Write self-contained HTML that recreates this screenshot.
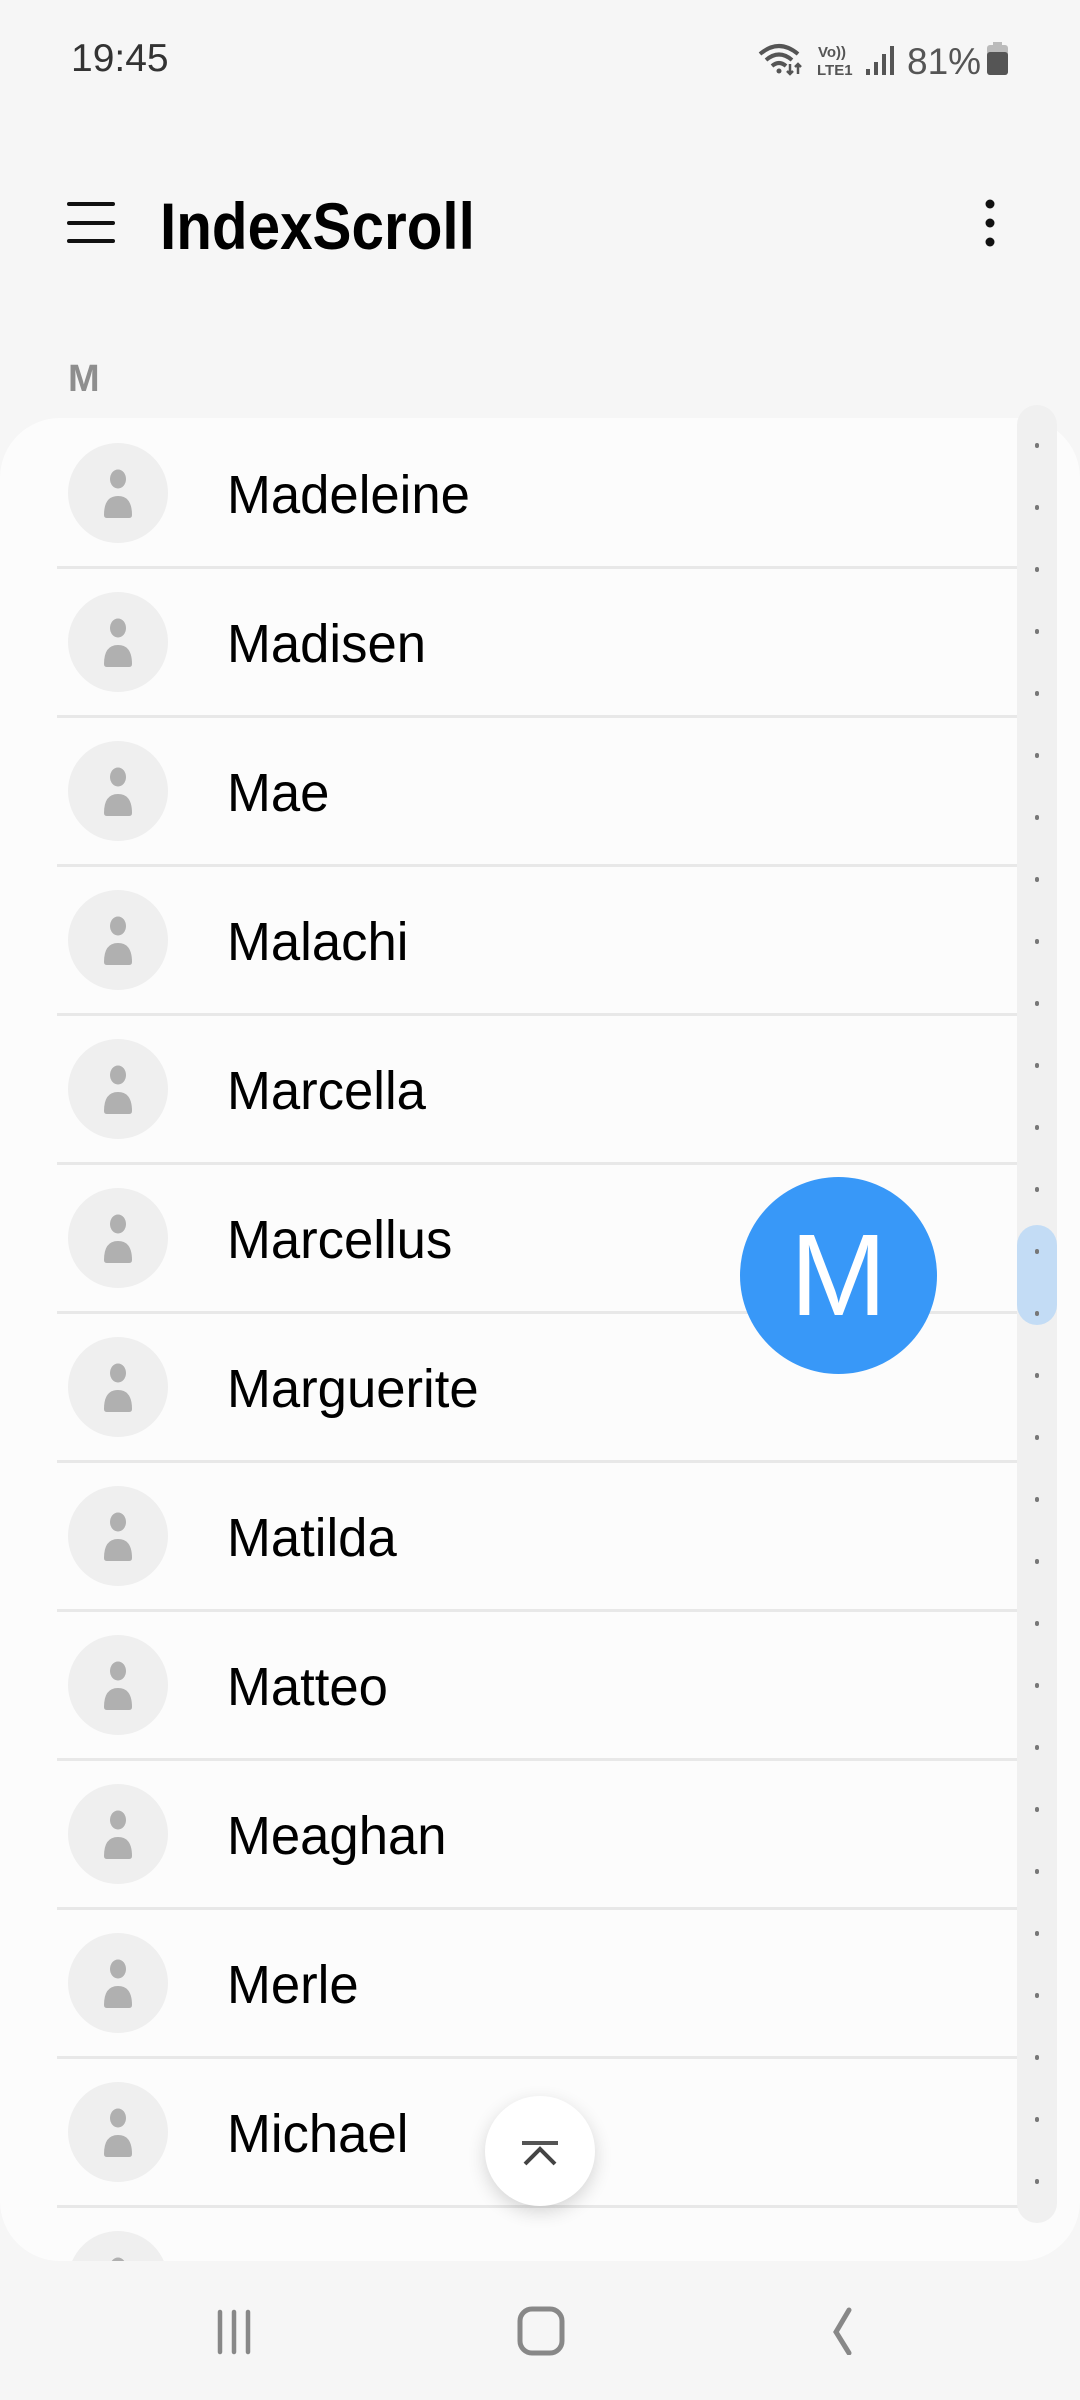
<!DOCTYPE html>
<html><head><meta charset="utf-8"><style>
*{margin:0;padding:0;box-sizing:border-box}
body{width:1080px;height:2400px;background:#f6f6f6;position:relative;overflow:hidden;font-family:"Liberation Sans",sans-serif}
.abs{position:absolute}
.row{position:absolute;left:0;width:1019px;height:149px}
.av{position:absolute;left:68px;top:25px;width:100px;height:100px;border-radius:50%;background:#efefef}
.nm{position:absolute;left:227px;top:3px;line-height:149px;font-size:54px;color:#000;transform:scaleX(0.975);transform-origin:left}
.sep{position:absolute;left:57px;right:0;bottom:-2px;height:3px;background:#e8e8e8}
.dot{position:absolute;left:1035px;width:4px;height:5px;border-radius:2px;background:#777}
</style></head><body>
<div class="abs" style="left:71px;top:37px;font-size:39px;color:#333">19:45</div>
<svg class="abs" style="left:755px;top:40px" width="260" height="40" viewBox="0 0 260 40">
<path d="M5 14 Q24 -2 43 14" stroke="#555" stroke-width="4" fill="none"/>
<path d="M11 20 Q24 9 37 20" stroke="#555" stroke-width="4" fill="none"/>
<path d="M17 26 Q24 20 31 26" stroke="#555" stroke-width="4" fill="none"/>
<circle cx="24" cy="31" r="2.5" fill="#555"/>
<path d="M35 24v10M32 31l3 3 3-3M43 34v-10M40 27l3-3 3 3" stroke="#555" stroke-width="2.5" fill="none"/>
<text x="63" y="17" font-size="15" font-weight="bold" fill="#555" font-family="Liberation Sans">Vo))</text>
<text x="62" y="35" font-size="15" font-weight="bold" fill="#555" font-family="Liberation Sans">LTE1</text>
<rect x="111" y="29" width="4" height="6" fill="#555"/><rect x="119" y="22" width="4" height="13" fill="#555"/><rect x="127" y="14" width="4" height="21" fill="#555"/><rect x="135" y="6" width="4" height="29" fill="#555"/>
<text x="152" y="34" font-size="37" fill="#555" font-family="Liberation Sans">81%</text>
<rect x="232" y="5" width="21" height="30" rx="3" fill="#bbb"/><rect x="232" y="12" width="21" height="23" rx="3" fill="#555"/><rect x="238" y="2" width="9" height="5" fill="#bbb"/>
</svg>
<svg class="abs" style="left:66px;top:200px" width="50" height="46"><path d="M3 4h44M3 23h44M3 41h44" stroke="#111" stroke-width="4" stroke-linecap="round"/></svg>
<div class="abs" style="left:160px;top:188px;font-size:66px;font-weight:bold;color:#000;transform:scaleX(0.885);transform-origin:left;line-height:76px">IndexScroll</div>
<svg class="abs" style="left:980px;top:198px" width="20" height="50"><circle cx="10" cy="6" r="4.5" fill="#111"/><circle cx="10" cy="25" r="4.5" fill="#111"/><circle cx="10" cy="44" r="4.5" fill="#111"/></svg>
<div class="abs" style="left:68px;top:358px;font-size:38px;font-weight:bold;color:#8e8e8e">M</div>

<div class="abs" style="left:0;top:418px;width:1080px;height:1843px;background:#fcfcfc;border-radius:60px;overflow:hidden">
<div id="rows"></div>
</div>
<div class="abs" style="left:1017px;top:405px;width:40px;height:1818px;border-radius:20px;background:#f0f0f0"></div>
<div class="abs" style="left:1017px;top:1225px;width:40px;height:100px;border-radius:20px;background:#c3dcf5"></div>
<div id="dots"></div>
<div class="abs" style="left:740px;top:1177px;width:197px;height:197px;border-radius:50%;background:#3898f8;color:#fff;font-size:116px;text-align:center;line-height:197px">M</div>
<div class="abs" style="left:485px;top:2096px;width:110px;height:110px;border-radius:50%;background:#fff;box-shadow:0 6px 18px rgba(0,0,0,0.16)"></div>
<svg class="abs" style="left:515px;top:2126px" width="50" height="50"><path d="M7 17h36" stroke="#555" stroke-width="4"/><path d="M10 38l15-15 15 15" stroke="#444" stroke-width="4" fill="none"/></svg>
<svg class="abs" style="left:210px;top:2305px" width="60" height="50"><path d="M10 7v40M24 7v40M38 7v40" stroke="#888" stroke-width="4.5" stroke-linecap="round"/></svg>
<svg class="abs" style="left:510px;top:2303px" width="60" height="54"><rect x="10" y="6" width="42" height="44" rx="12" stroke="#888" stroke-width="5" fill="none"/></svg>
<svg class="abs" style="left:815px;top:2305px" width="50" height="50"><path d="M34 5L21 27l13 21" stroke="#888" stroke-width="5" fill="none" stroke-linecap="round"/></svg>
<script>
var names=["Madeleine","Madisen","Mae","Malachi","Marcella","Marcellus","Marguerite","Matilda","Matteo","Meaghan","Merle","Michael","Micah"];
var h="";
names.forEach(function(n,i){
h+='<div class="row" style="top:'+(i*149)+'px"><div class="av"><svg width="100" height="100"><ellipse cx="50" cy="36" rx="8" ry="9.5" fill="#b0b0b0"/><path d="M36 72 Q36 53 50 53 Q64 53 64 72 Q64 75 61 75 H39 Q36 75 36 72Z" fill="#b0b0b0"/></svg></div><div class="nm">'+n+'</div>'+(i<12?'<div class="sep"></div>':'')+'</div>';
});
document.getElementById("rows").innerHTML=h;
var d="";for(var k=0;k<29;k++){d+='<div class="dot" style="top:'+(443+k*62)+'px"></div>';}
document.getElementById("dots").innerHTML=d;
</script>
</body></html>
